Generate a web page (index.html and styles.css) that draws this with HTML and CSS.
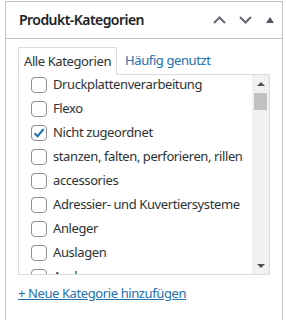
FILE: index.html
```html
<!DOCTYPE html>
<html lang="de">
<head>
  <meta charset="UTF-8" />
  <meta name="viewport" content="width=device-width, initial-scale=1.0"/>
  <title>Produkt-Kategorien</title>
  <link rel="stylesheet" href="styles.css">
</head>
<body>
  <div class="postbox">
    <div class="postbox_header">
      <h2>Produkt-Kategorien</h2>
      <div class="handle_actions">
        <button class="handle order_higher" aria-label="Nach oben">
          <svg width="13" height="8" viewBox="0 0 13 8"><path d="M1 7 L6.5 1.5 L12 7" fill="none" stroke="currentColor" stroke-width="2"/></svg>
        </button>
        <button class="handle order_lower" aria-label="Nach unten">
          <svg width="13" height="8" viewBox="0 0 13 8"><path d="M1 1 L6.5 6.5 L12 1" fill="none" stroke="currentColor" stroke-width="2"/></svg>
        </button>
        <button class="handle toggle" aria-label="Umschalten">
          <svg width="8" height="6" viewBox="0 0 8 6"><path d="M0 6 L4 0 L8 6 Z" fill="currentColor"/></svg>
        </button>
      </div>
    </div>

    <div class="inside">
      <ul class="category_tabs">
        <li class="tab active">Alle Kategorien</li>
        <li class="tab"><a href="#">Häufig genutzt</a></li>
      </ul>

      <div class="tabs_panel">
        <ul class="checklist">
          <li><span class="cb"></span><span class="label">Druckplattenverarbeitung</span></li>
          <li><span class="cb"></span><span class="label">Flexo</span></li>
          <li><span class="cb checked"><svg width="14" height="14" viewBox="0 0 14 14"><path d="M2.5 7.2 L5.6 10.2 L11.6 3" fill="none" stroke="#2271b1" stroke-width="2"/></svg></span><span class="label">Nicht zugeordnet</span></li>
          <li><span class="cb"></span><span class="label">stanzen, falten, perforieren, rillen</span></li>
          <li><span class="cb"></span><span class="label">accessories</span></li>
          <li><span class="cb"></span><span class="label">Adressier- und Kuvertiersysteme</span></li>
          <li><span class="cb"></span><span class="label">Anleger</span></li>
          <li><span class="cb"></span><span class="label">Auslagen</span></li>
          <li><span class="cb"></span><span class="label">Auslagen</span></li>
        </ul>
        <div class="scrollbar">
          <div class="sb_button"><span class="arrow up"></span></div>
          <div class="sb_track"><div class="sb_thumb"></div></div>
          <div class="sb_button"><span class="arrow down"></span></div>
        </div>
      </div>

      <a class="add_new" href="#">+ Neue Kategorie hinzufügen</a>
    </div>
  </div>
</body>
</html>
```

FILE: styles.css
```css
body {
  margin: 0;
  background-color: #fff;
  font-family: "Noto Sans", "Open Sans", sans-serif;
  color: #2c3338;
}

.postbox {
  margin: 1px 0 0 5px;
  width: 278px;
  height: 330px;
  box-sizing: border-box;
  border: 1px solid #c3c4c7;
  background-color: #fff;
}

.postbox_header {
  height: 36px;
  display: flex;
  align-items: center;
  border-bottom: 1px solid #c3c4c7;
  padding-left: 13px;
}

.postbox_header h2 {
  flex: 1;
  margin: 0 0 2px;
  font-size: 14px;
  font-weight: 600;
  letter-spacing: -0.55px;
  color: #1d2327;
}

.handle_actions {
  display: flex;
  height: 100%;
}

.handle {
  border: none;
  background: none;
  padding: 0;
  height: 100%;
  display: flex;
  align-items: center;
  justify-content: center;
  color: #646970;
}

.order_higher,
.order_lower {
  width: 26px;
}

.toggle {
  width: 24px;
  color: #50575e;
}

.inside {
  padding: 8px 12px 0;
  font-size: 13px;
  letter-spacing: -0.4px;
}

.category_tabs {
  list-style: none;
  margin: 0;
  padding: 0;
  display: flex;
}

.tab {
  height: 28px;
  box-sizing: border-box;
  padding: 0 8px 2px;
  display: flex;
  align-items: center;
  margin-bottom: -1px;
  position: relative;
}

.tab.active {
  border: 1px solid #dcdcde;
  border-bottom: none;
  background-color: #fff;
  padding: 0 5px 2px 5px;
  color: #2c3338;
}

.tab a {
  color: #2271b1;
  text-decoration: none;
}

.tabs_panel {
  height: 201px;
  box-sizing: border-box;
  border: 1px solid #dcdcde;
  display: flex;
  overflow: hidden;
}

.checklist {
  flex: 1;
  list-style: none;
  margin: -2px 0 0;
  padding: 0;
  overflow: hidden;
}

.checklist li {
  height: 24px;
  display: flex;
  align-items: center;
  padding-left: 12px;
  white-space: nowrap;
}

.label {
  margin-bottom: 3px;
}

.cb {
  width: 16px;
  height: 16px;
  box-sizing: border-box;
  border: 1px solid #8c8f94;
  border-radius: 4px;
  margin-right: 6px;
  display: flex;
  align-items: center;
  justify-content: center;
  flex-shrink: 0;
}

.scrollbar {
  width: 17px;
  background-color: #f1f1f1;
  display: flex;
  flex-direction: column;
}

.sb_button {
  height: 17px;
  display: flex;
  align-items: center;
  justify-content: center;
}

.arrow {
  width: 0;
  height: 0;
  border-left: 4px solid transparent;
  border-right: 4px solid transparent;
}

.arrow.up {
  border-bottom: 4px solid #505050;
}

.arrow.down {
  border-top: 4px solid #505050;
}

.sb_track {
  flex: 1;
  padding: 1px 2px;
}

.sb_thumb {
  height: 17px;
  background-color: #c1c1c1;
}

.add_new {
  display: inline-block;
  margin-top: 8px;
  line-height: 20px;
  color: #2271b1;
  text-decoration: underline;
}
```
